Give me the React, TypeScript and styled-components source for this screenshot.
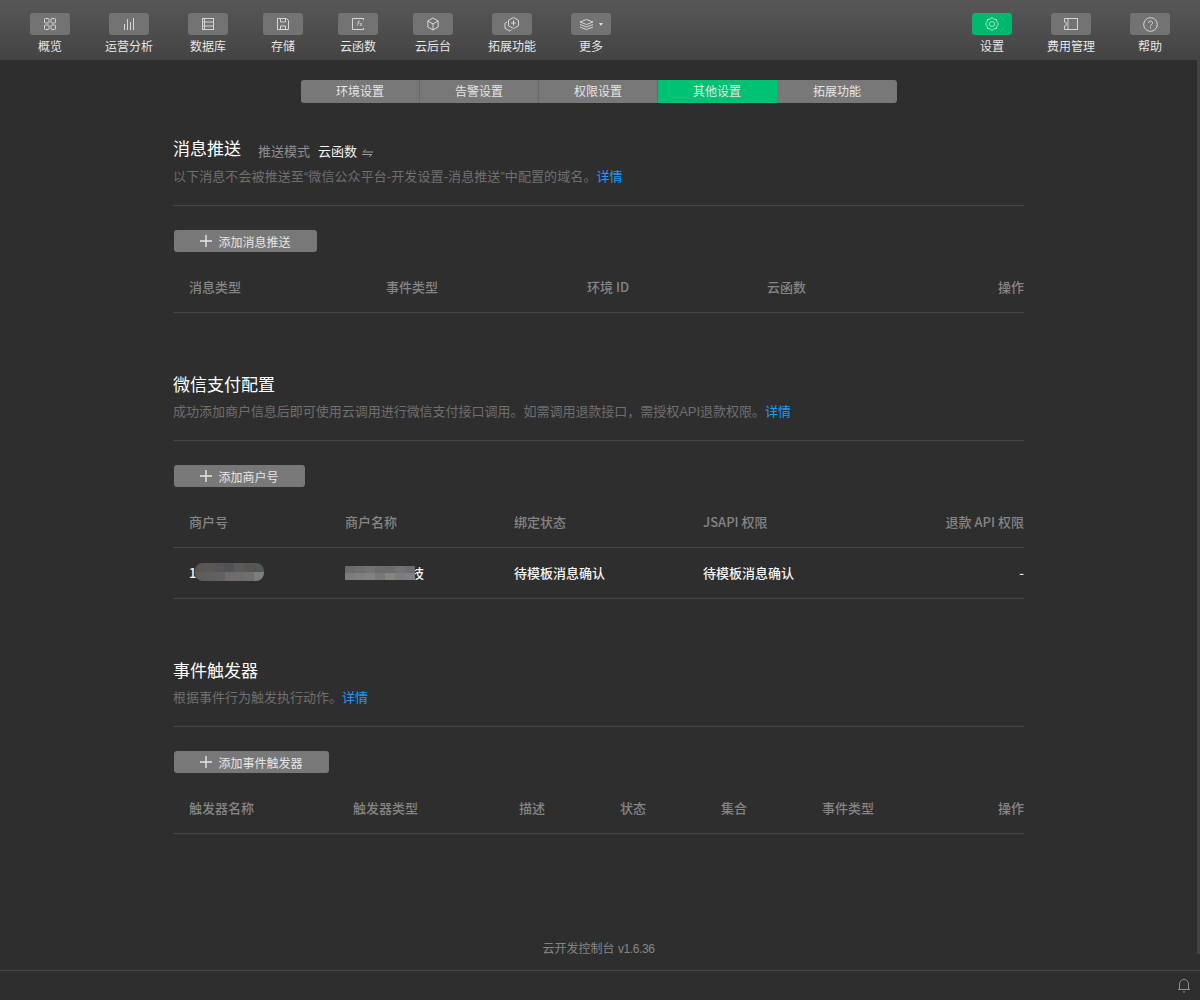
import React from "react";
import styled, { createGlobalStyle } from "styled-components";

const GlobalStyle = createGlobalStyle`
  html, body {
    margin: 0;
    padding: 0;
    background: #2e2e2e;
  }
  body {
    font-family: "Liberation Sans", "Noto Sans CJK SC", sans-serif;
    font-size: 13px;
    color: #fff;
  }
`;

const Page = styled.div`
  width: 1200px;
  height: 1000px;
  display: flex;
  flex-direction: column;
  overflow: hidden;
  background: #2e2e2e;
`;

const Toolbar = styled.header`
  height: 60px;
  flex: none;
  display: flex;
  justify-content: space-between;
  padding: 13px 30px 0;
  box-sizing: border-box;
  background: linear-gradient(#585858, #434343);
`;

const ToolGroup = styled.div`
  display: flex;
  gap: 35px;
`;

const ToolItem = styled.div`
  min-width: 40px;
  display: flex;
  flex-direction: column;
  align-items: center;
  color: #e6e6e6;
  font-size: 12px;
  line-height: 16px;
`;

const ToolIcon = styled.div<{ $active?: boolean }>`
  width: 40px;
  height: 22px;
  margin-bottom: 4px;
  border-radius: 3px;
  display: flex;
  align-items: center;
  justify-content: center;
  color: ${(p) => (p.$active ? "#a8e8cb" : "#d6d6d6")};
  background: ${(p) => (p.$active ? "#00b86e" : "#737373")};
`;

const Caret = styled.span`
  width: 0;
  height: 0;
  margin-left: 5px;
  border-left: 2.5px solid transparent;
  border-right: 2.5px solid transparent;
  border-top: 3px solid #dcdcdc;
`;

const Body = styled.div`
  flex: 1;
  display: flex;
  min-height: 0;
`;

const Main = styled.main`
  flex: 1;
  display: flex;
  flex-direction: column;
  align-items: center;
`;

const ScrollThumb = styled.div`
  width: 3px;
  flex: none;
  margin-bottom: 16px;
  background: #444444;
`;

const Tabs = styled.nav`
  margin: 20px 0 0 1px;
  display: flex;
  height: 23px;
  border-radius: 3px;
  overflow: hidden;
`;

const Tab = styled.div<{ $active?: boolean }>`
  width: 119px;
  box-sizing: border-box;
  text-align: center;
  line-height: 24px;
  font-size: 12px;
  color: #e6e6e6;
  background: ${(p) => (p.$active ? "#00c274" : "#787878")};
  border-right: 1px solid ${(p) => (p.$active ? "#00c274" : "#6b6b6b")};
  &:last-child {
    width: 120px;
    border-right: 0;
  }
`;

const Content = styled.div`
  width: 851px;
`;

const Section = styled.section<{ $top: number }>`
  margin-top: ${(p) => p.$top}px;
`;

const TitleRow = styled.div<{ $tall?: boolean }>`
  display: flex;
  align-items: baseline;
  height: ${(p) => (p.$tall ? 25 : 24)}px;
`;

const Title = styled.h2`
  margin: 0;
  font-size: 17px;
  line-height: 24px;
  font-weight: 400;
  color: #fff;
`;

const ModeLabel = styled.span`
  align-self: flex-end;
  margin-left: 17px;
  font-size: 13px;
  line-height: 22px;
  color: #8f8f8f;
`;

const ModeValue = styled.span`
  align-self: flex-end;
  margin-left: 8px;
  font-size: 13px;
  line-height: 22px;
  color: #f2f2f2;
`;

const SwapIcon = styled.svg`
  margin-left: 5px;
  align-self: center;
  margin-top: 5px;
  color: #9a9a9a;
`;

const Desc = styled.p<{ $spacing?: number }>`
  margin: 3px 0 0;
  font-size: 13px;
  line-height: 22px;
  color: #6f6f6f;
  letter-spacing: ${(p) => p.$spacing ?? 0}px;
`;

const Link = styled.a`
  color: #1a9cff;
`;

const Divider = styled.div`
  height: 1px;
  background: #454545;
  margin-top: 17px;
`;

const AddButton = styled.button<{ $width: number }>`
  display: flex;
  align-items: center;
  justify-content: center;
  gap: 6px;
  width: ${(p) => p.$width}px;
  height: 22px;
  margin: 24px 0 0 1px;
  padding: 0;
  border: 0;
  border-radius: 3px;
  background: #787878;
  color: #e6e6e6;
  font: inherit;
  font-size: 12px;
`;

const Row = styled.div<{ $cols: string; $height: number; $head?: boolean }>`
  display: grid;
  grid-template-columns: ${(p) => p.$cols};
  height: ${(p) => p.$height}px;
  align-items: center;
  padding-left: 16px;
  padding-top: ${(p) => (p.$head ? 8 : 0)}px;
  padding-bottom: ${(p) => (p.$head ? 0 : 2)}px;
  border-bottom: 1px solid #454545;
  box-sizing: border-box;
`;

const HeadCell = styled.div<{ $end?: boolean }>`
  font-family: "Noto Sans CJK SC", sans-serif;
  font-size: 13px;
  font-weight: 500;
  color: #858585;
  white-space: nowrap;
  text-align: ${(p) => (p.$end ? "right" : "left")};
`;

const BodyCell = styled.div<{ $end?: boolean }>`
  position: relative;
  font-family: "Noto Sans CJK SC", sans-serif;
  font-size: 13px;
  font-weight: 500;
  color: #f5f5f5;
  white-space: nowrap;
  text-align: ${(p) => (p.$end ? "right" : "left")};
`;

const Mosaic = styled.span<{
  $left: number;
  $width: number;
  $height: number;
  $radius: number;
  $shift: number;
}>`
  position: absolute;
  top: 50%;
  left: ${(p) => p.$left}px;
  width: ${(p) => p.$width}px;
  height: ${(p) => p.$height}px;
  transform: translateY(calc(-50% + ${(p) => p.$shift}px));
  display: grid;
  grid-template-columns: repeat(7, 1fr);
  border-radius: ${(p) => p.$radius}px;
  overflow: hidden;
`;

const MosaicTile = styled.i<{ $color: string }>`
  display: block;
  background: ${(p) => p.$color};
`;

const NameTail = styled.span`
  margin-left: 53px;
`;

const Version = styled.div`
  margin-top: 105px;
  font-size: 12px;
  color: #858585;
  text-align: center;
  width: 100%;
`;

const VersionNumber = styled.span`
  letter-spacing: -0.4px;
`;

const StatusBar = styled.footer`
  height: 30px;
  flex: none;
  box-sizing: border-box;
  border-top: 1px solid #454545;
  display: flex;
  align-items: center;
  justify-content: flex-end;
  padding-right: 9px;
  color: #8c8c8c;
`;

const Svg = ({ children, w = 14, h = 14 }: { children: React.ReactNode; w?: number; h?: number }) => (
  <svg width={w} height={h} viewBox={`0 0 ${w} ${h}`} fill="none" stroke="currentColor" strokeWidth="1">
    {children}
  </svg>
);

const icons: Record<string, React.ReactNode> = {
  overview: (
    <Svg>
      <rect x="1.5" y="1.5" width="4.5" height="4.5" rx="1" />
      <rect x="8" y="1.5" width="4.5" height="4.5" rx="1" />
      <rect x="1.5" y="8" width="4.5" height="4.5" rx="1" />
      <rect x="8" y="8" width="4.5" height="4.5" rx="1" />
    </Svg>
  ),
  chart: (
    <Svg>
      <path d="M2.5 7v6M5.5 2v11M8.5 5v8M11.5 1v12" />
    </Svg>
  ),
  database: (
    <Svg>
      <rect x="1.5" y="1.5" width="11" height="11" />
      <path d="M1.5 5h11M1.5 9h11M3.5 1.5v11" />
    </Svg>
  ),
  storage: (
    <Svg>
      <path d="M1.5 1.5h9l2 2v9h-11z" />
      <path d="M4.5 1.5v3.5h5V1.5M4.5 12.5V9h5v3.5" />
    </Svg>
  ),
  func: (
    <Svg>
      <path d="M12.5 3V1.5h-11v11h11V11" />
      <path d="M6.5 9l1-5h1.5M6.5 6h2M9 6l2 3M11 6l-2 3" strokeWidth="0.7" />
    </Svg>
  ),
  box: (
    <Svg>
      <path d="M7 1l5.2 3v6L7 13l-5.2-3V4z" />
      <path d="M1.8 4L7 7l5.2-3M7 7v6" />
    </Svg>
  ),
  extend: (
    <Svg w={16} h={15}>
      <path d="M9.5.5l5 2.75v5.5l-5 2.75-5-2.75v-5.5z" />
      <path d="M9.5 3.5v5M7 6h5" />
      <path d="M3 5L1 6.2v5l4.5 2.8 2-1.2" />
    </Svg>
  ),
  layers: (
    <Svg w={15} h={11}>
      <path d="M7.5.5l6.5 2.5-6.5 2.5L1 3zM1 5.5L7.5 8 14 5.5M1 8l6.5 2.5L14 8" />
    </Svg>
  ),
  gear: (
    <Svg>
      <path d="M13.5 7l-1.7 2-.2 2.6-2.6.2L7 13.5l-2-1.7-2.6-.2-.2-2.6L.5 7l1.7-2 .2-2.6 2.6-.2L7 .5l2 1.7 2.6.2.2 2.6z" />
      <circle cx="7" cy="7" r="2.5" />
    </Svg>
  ),
  ticket: (
    <Svg w={16} h={14}>
      <path d="M1.5 1.5h13v11h-13V9a2 2 0 0 0 0-4z" />
      <path d="M5 1.5v11" />
    </Svg>
  ),
  help: (
    <Svg w={15} h={15}>
      <circle cx="7.5" cy="7.5" r="6.8" />
      <path d="M5.5 6a2 2 0 1 1 3 1.7c-.7.4-1 .8-1 1.6" />
      <path d="M7.5 10.3v1.2" />
    </Svg>
  ),
};

const leftTools = [
  { icon: "overview", label: "概览" },
  { icon: "chart", label: "运营分析" },
  { icon: "database", label: "数据库" },
  { icon: "storage", label: "存储" },
  { icon: "func", label: "云函数" },
  { icon: "box", label: "云后台" },
  { icon: "extend", label: "拓展功能" },
  { icon: "layers", label: "更多", caret: true },
];

const rightTools = [
  { icon: "gear", label: "设置", active: true },
  { icon: "ticket", label: "费用管理" },
  { icon: "help", label: "帮助" },
];

const tabs = ["环境设置", "告警设置", "权限设置", "其他设置", "拓展功能"];

const idTiles = [
  "#5a5654", "#5c5755", "#545556", "#505355", "#5a5a5b", "#5a5553", "#525758",
  "#5f5c5b", "#605e5d", "#616161", "#6c6c70", "#706a6a", "#6f6f6f", "#7c7f7e",
];

const nameTiles = [
  "#6a6b6c", "#6f6f70", "#747272", "#6c6e6e", "#6b6b6b", "#747371", "#6d6d70",
  "#7c7c80", "#827e7e", "#808283", "#767878", "#888580", "#7c7c80", "#808084",
];

const Plus = () => (
  <svg width="12" height="12" viewBox="0 0 12 12" stroke="currentColor" strokeWidth="1.4">
    <path d="M6 0v12M0 6h12" />
  </svg>
);

const App = () => {
  return (
    <Page>
      <GlobalStyle />
      <Toolbar>
        <ToolGroup>
          {leftTools.map((t) => (
            <ToolItem key={t.label}>
              <ToolIcon>
                {icons[t.icon]}
                {t.caret && <Caret />}
              </ToolIcon>
              {t.label}
            </ToolItem>
          ))}
        </ToolGroup>
        <ToolGroup>
          {rightTools.map((t) => (
            <ToolItem key={t.label}>
              <ToolIcon $active={t.active}>{icons[t.icon]}</ToolIcon>
              {t.label}
            </ToolItem>
          ))}
        </ToolGroup>
      </Toolbar>
      <Body>
        <Main>
          <Tabs>
            {tabs.map((t) => (
              <Tab key={t} $active={t === "其他设置"}>
                {t}
              </Tab>
            ))}
          </Tabs>
          <Content>
            <Section $top={35}>
              <TitleRow $tall>
                <Title>消息推送</Title>
                <ModeLabel>推送模式</ModeLabel>
                <ModeValue>云函数</ModeValue>
                <SwapIcon width="11" height="8" viewBox="0 0 11 8" fill="none" stroke="currentColor" strokeWidth="1">
                  <path d="M11 3H1L4 .5M0 5.5h10L7 8" />
                </SwapIcon>
              </TitleRow>
              <Desc $spacing={0.09}>
                以下消息不会被推送至“微信公众平台-开发设置-消息推送”中配置的域名。<Link>详情</Link>
              </Desc>
              <Divider />
              <AddButton $width={143}>
                <Plus />
                添加消息推送
              </AddButton>
              <Row $head $cols="197px 201px 180px 1fr 60px" $height={61}>
                <HeadCell>消息类型</HeadCell>
                <HeadCell>事件类型</HeadCell>
                <HeadCell>环境 ID</HeadCell>
                <HeadCell>云函数</HeadCell>
                <HeadCell $end>操作</HeadCell>
              </Row>
            </Section>
            <Section $top={61}>
              <TitleRow>
                <Title>微信支付配置</Title>
              </TitleRow>
              <Desc $spacing={-0.02}>
                成功添加商户信息后即可使用云调用进行微信支付接口调用。如需调用退款接口，需授权API退款权限。<Link>详情</Link>
              </Desc>
              <Divider />
              <AddButton $width={131}>
                <Plus />
                添加商户号
              </AddButton>
              <Row $head $cols="156px 169px 189px 1fr 100px" $height={61}>
                <HeadCell>商户号</HeadCell>
                <HeadCell>商户名称</HeadCell>
                <HeadCell>绑定状态</HeadCell>
                <HeadCell>JSAPI 权限</HeadCell>
                <HeadCell $end>退款 API 权限</HeadCell>
              </Row>
              <Row $cols="156px 169px 189px 1fr 100px" $height={51}>
                <BodyCell>
                  1
                  <Mosaic $left={6} $width={69} $height={18} $radius={8} $shift={0}>
                    {idTiles.map((c, i) => (
                      <MosaicTile key={i} $color={c} />
                    ))}
                  </Mosaic>
                </BodyCell>
                <BodyCell>
                  商
                  <NameTail>技</NameTail>
                  <Mosaic $left={0} $width={70} $height={14} $radius={1} $shift={1}>
                    {nameTiles.map((c, i) => (
                      <MosaicTile key={i} $color={c} />
                    ))}
                  </Mosaic>
                </BodyCell>
                <BodyCell>待模板消息确认</BodyCell>
                <BodyCell>待模板消息确认</BodyCell>
                <BodyCell $end>-</BodyCell>
              </Row>
            </Section>
            <Section $top={61}>
              <TitleRow>
                <Title>事件触发器</Title>
              </TitleRow>
              <Desc>
                根据事件行为触发执行动作。<Link>详情</Link>
              </Desc>
              <Divider />
              <AddButton $width={155}>
                <Plus />
                添加事件触发器
              </AddButton>
              <Row $head $cols="164px 166px 101px 101px 101px 1fr 60px" $height={61}>
                <HeadCell>触发器名称</HeadCell>
                <HeadCell>触发器类型</HeadCell>
                <HeadCell>描述</HeadCell>
                <HeadCell>状态</HeadCell>
                <HeadCell>集合</HeadCell>
                <HeadCell>事件类型</HeadCell>
                <HeadCell $end>操作</HeadCell>
              </Row>
            </Section>
          </Content>
          <Version>
            云开发控制台 <VersionNumber>v1.6.36</VersionNumber>
          </Version>
        </Main>
        <ScrollThumb />
      </Body>
      <StatusBar>
        <svg width="14" height="15" viewBox="0 0 14 15" fill="none" stroke="currentColor" strokeWidth="1">
          <path d="M1 11.5h12M2.5 11.5V6a4.5 4.5 0 0 1 9 0v5.5M7 .5v1M6 14h2" />
        </svg>
      </StatusBar>
    </Page>
  );
};

export default App;
